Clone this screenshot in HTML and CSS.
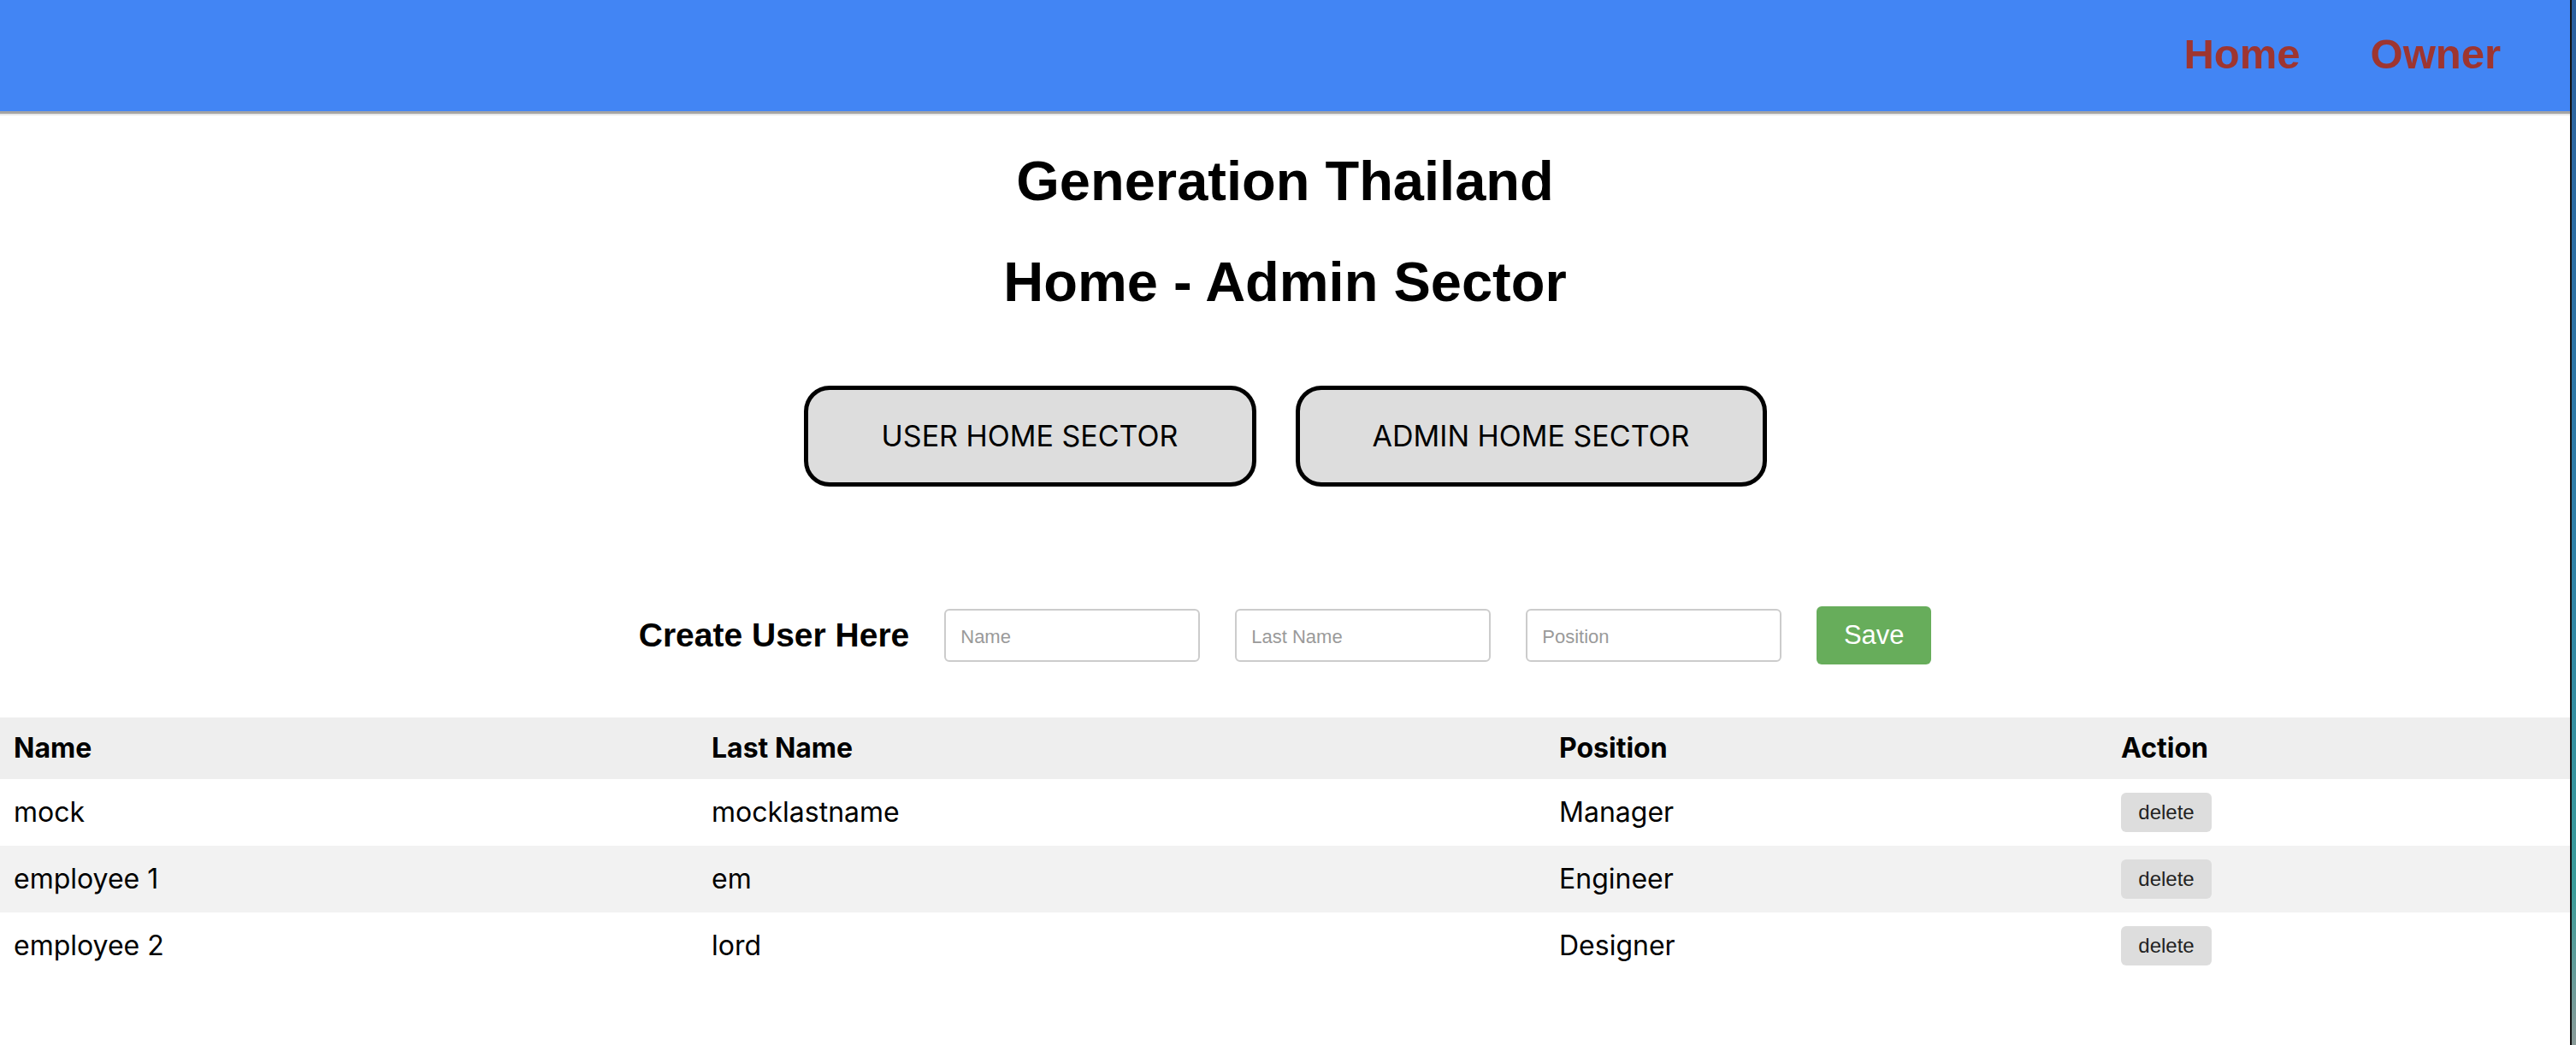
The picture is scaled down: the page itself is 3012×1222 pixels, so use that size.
FILE: index.html
```html
<!DOCTYPE html>
<html lang="en">
<head>
<meta charset="utf-8">
<title>Generation Thailand - Admin</title>
<link rel="stylesheet" href="styles.css">
</head>
<body>
<div class="page">
  <nav class="topbar">
    <a class="nav-link" href="#">Home</a>
    <a class="nav-link" href="#">Owner</a>
  </nav>
  <header class="titles">
    <h1 class="title">Generation Thailand</h1>
    <h1 class="title">Home - Admin Sector</h1>
  </header>
  <div class="sectors">
    <button class="sector-btn sector-user">USER HOME SECTOR</button>
    <button class="sector-btn sector-admin">ADMIN HOME SECTOR</button>
  </div>
  <form class="create-row">
    <h3 class="create-label">Create User Here</h3>
    <input class="field" type="text" placeholder="Name">
    <input class="field" type="text" placeholder="Last Name">
    <input class="field" type="text" placeholder="Position">
    <button class="save-btn" type="button">Save</button>
  </form>
  <table class="users">
    <colgroup>
      <col class="c-name">
      <col class="c-last">
      <col class="c-pos">
      <col class="c-act">
    </colgroup>
    <thead>
      <tr><th>Name</th><th>Last Name</th><th>Position</th><th>Action</th></tr>
    </thead>
    <tbody>
      <tr><td>mock</td><td>mocklastname</td><td>Manager</td><td><button class="del-btn">delete</button></td></tr>
      <tr><td>employee 1</td><td>em</td><td>Engineer</td><td><button class="del-btn">delete</button></td></tr>
      <tr><td>employee 2</td><td>lord</td><td>Designer</td><td><button class="del-btn">delete</button></td></tr>
    </tbody>
  </table>
</div>
</body>
</html>
```
FILE: styles.css
```css
html, body {
  margin: 0;
  padding: 0;
}
body {
  display: flex;
  min-height: 100vh;
  background: linear-gradient(180deg, #2c5f9e 0%, #2f7fa8 50%, #3a9c9a 85%, #8a9a98 100%);
  font-family: Inter, "Liberation Sans", sans-serif;
  color: #000;
}
.page {
  flex: none;
  width: 3005px;
  background: #fff;
  border-right: 2px solid #111;
}
.topbar {
  box-sizing: content-box;
  height: 125px;
  background: #4285f4;
  border-bottom: 3px solid #a4a4a4;
  box-shadow: 0 2px 0 #e9e9e9;
  display: flex;
  justify-content: flex-end;
  align-items: center;
  gap: 82px;
  padding: 0 81px 5px 0;
}
.nav-link {
  font-family: "Liberation Sans", Arial, sans-serif;
  font-weight: bold;
  font-size: 49px;
  color: #9e3530;
  text-decoration: none;
}
.titles {
  display: flex;
  flex-direction: column;
  gap: 44px;
  padding-top: 42px;
}
.title {
  margin: 0;
  text-align: center;
  font-family: "Liberation Sans", Arial, sans-serif;
  font-weight: bold;
  font-size: 65px;
  line-height: 74px;
}
.sectors {
  display: flex;
  justify-content: center;
  gap: 46px;
  margin-top: 84px;
}
.sector-btn {
  box-sizing: border-box;
  height: 118px;
  border: 5px solid #000;
  border-radius: 30px;
  background: #dddddd;
  font-family: Inter, sans-serif;
  font-size: 34px;
  line-height: 44px;
  color: #000;
  padding: 0;
}
.sector-user { width: 529px; }
.sector-admin { width: 551px; }
.create-row {
  display: flex;
  justify-content: center;
  align-items: center;
  gap: 41px;
  margin: 140px 0 0;
}
.create-label {
  margin: 0;
  font-family: "Liberation Sans", Arial, sans-serif;
  font-weight: bold;
  font-size: 39px;
}
.field {
  box-sizing: border-box;
  width: 299px;
  height: 62px;
  border: 2px solid #cccccc;
  border-radius: 6px;
  padding: 4px 17px 0;
  font-family: "Liberation Sans", Arial, sans-serif;
  font-size: 22px;
  background: #fff;
}
.field::placeholder {
  color: #9a9a9a;
}
.save-btn {
  box-sizing: border-box;
  width: 134px;
  height: 68px;
  border: none;
  border-radius: 6px;
  background: #67ad5b;
  color: #fff;
  font-family: "Liberation Sans", Arial, sans-serif;
  font-size: 31px;
  padding: 0;
}
.users {
  width: 100%;
  margin-top: 62px;
  border-collapse: collapse;
  table-layout: fixed;
  font-size: 32px;
}
.c-name { width: 816px; }
.c-last { width: 991px; }
.c-pos { width: 657px; }
.c-act { width: 541px; }
.users th,
.users td {
  text-align: left;
  padding: 16px;
  line-height: 40px;
}
.users th {
  font-weight: bold;
  background: #eeeeee;
}
.users tbody tr:nth-child(even) td {
  background: #f2f2f2;
}
.users td {
  height: 46px;
}
.del-btn {
  display: block;
  box-sizing: border-box;
  width: 106px;
  height: 46px;
  border: none;
  border-radius: 6px;
  background: #dddddd;
  color: #222;
  font-family: "Liberation Sans", Arial, sans-serif;
  font-size: 24px;
  padding: 0;
}
```
